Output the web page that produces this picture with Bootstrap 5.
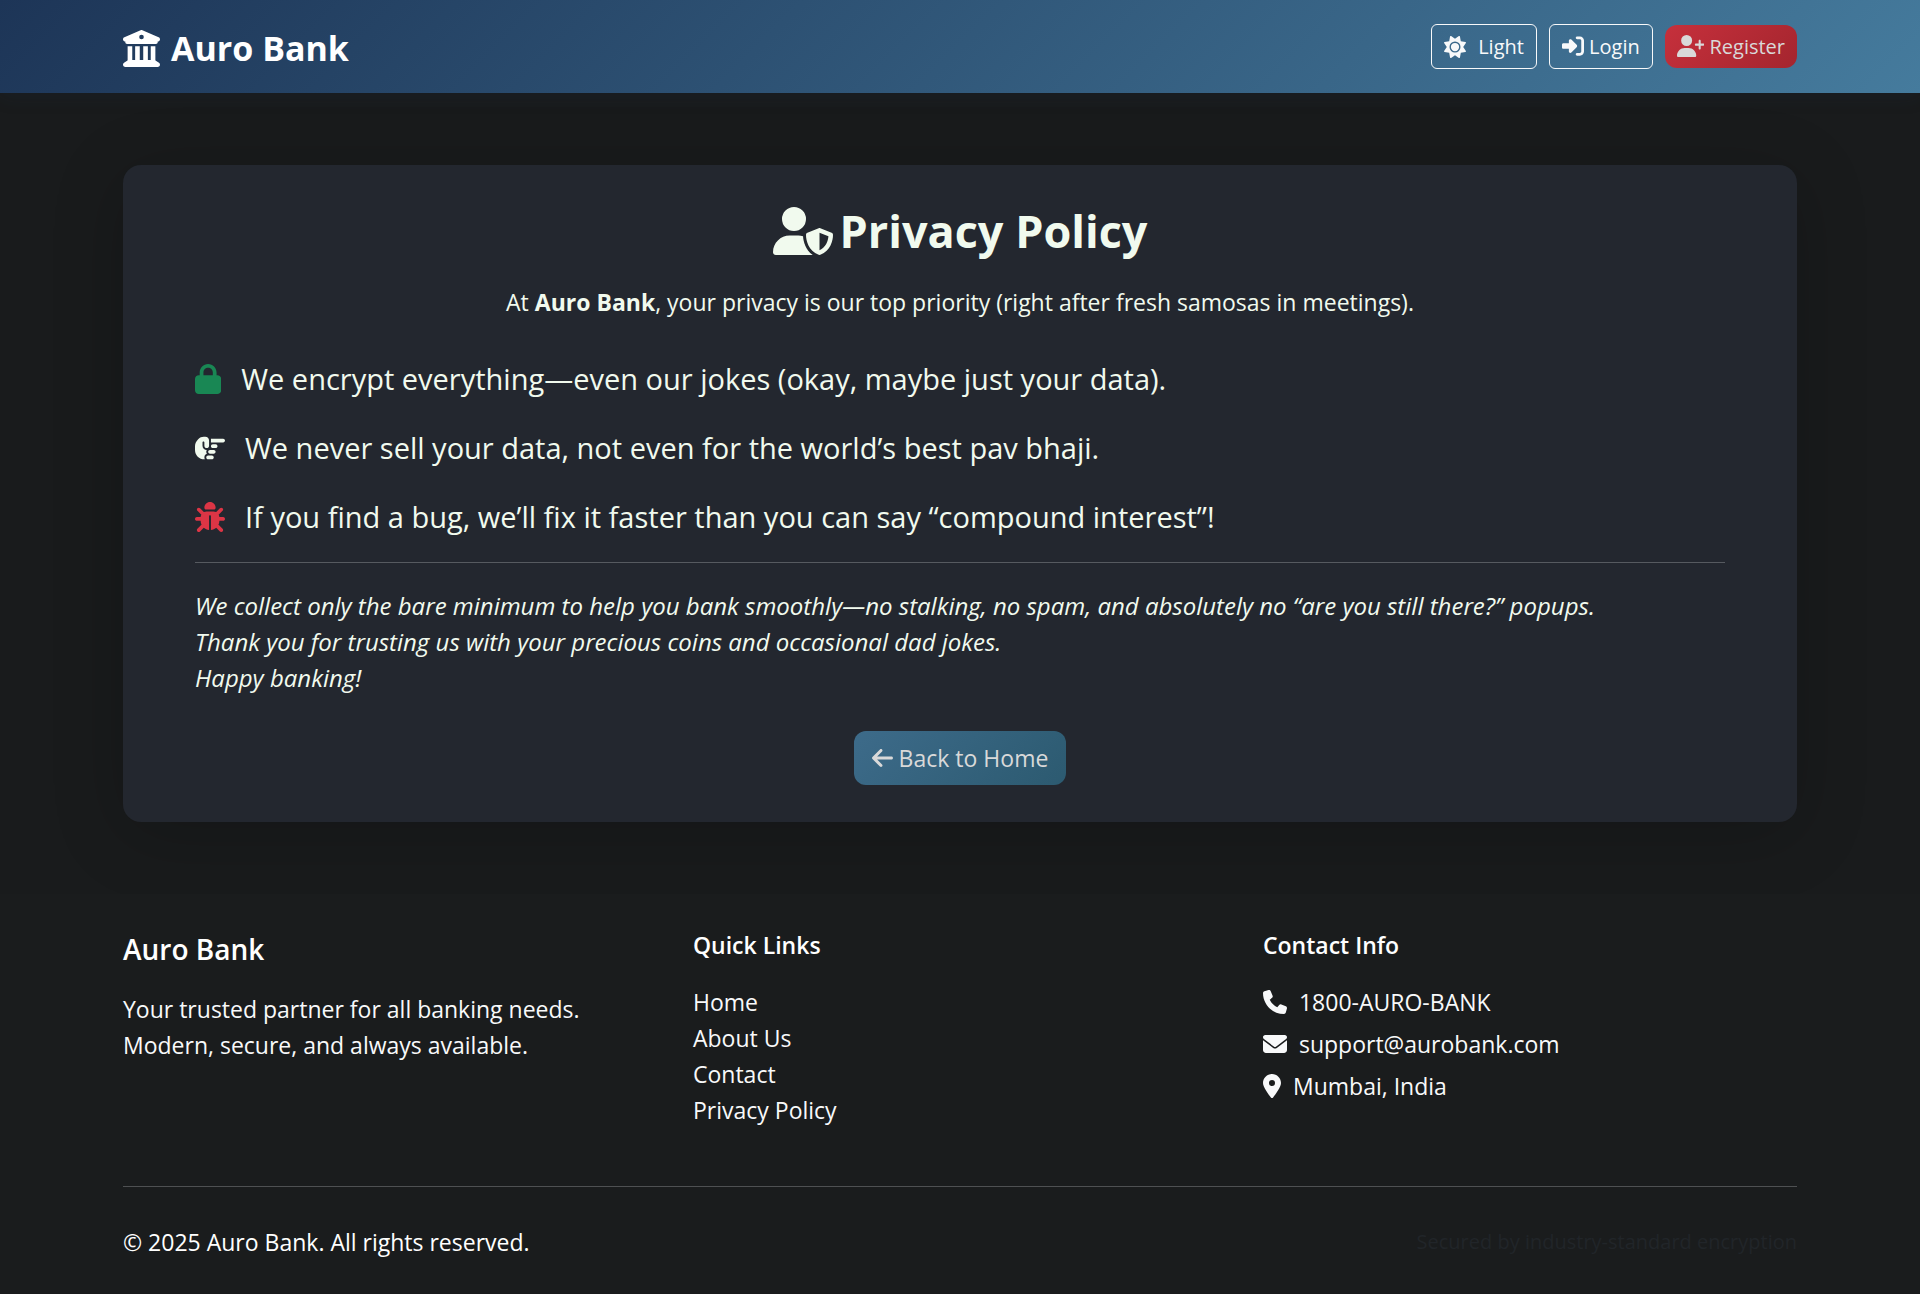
<!DOCTYPE html>
<html lang="en">
<head>
<meta charset="utf-8">
<meta name="viewport" content="width=device-width, initial-scale=1">
<title>Privacy Policy - Auro Bank</title>
<link href="https://cdn.jsdelivr.net/npm/bootstrap@5.3.0/dist/css/bootstrap.min.css" rel="stylesheet">
<style>
html { font-size: 24px; }
body { font-family: "Open Sans", "Noto Sans", sans-serif; font-size: 23px; line-height: 36px; background: #191b1c; color: #f1faee; }
.page-wrap { max-width: 1710px; padding-left: 18px; padding-right: 18px; }
.site-nav { background: linear-gradient(135deg, #1d3557 0%, #457b9d 100%); box-shadow: 0 3px 18px rgba(29,53,87,.15); padding: 18px 0; min-height: 93px; }
.ico { height: 1em; width: auto; fill: currentColor; vertical-align: -3px; flex: none; }
.brand { font-size: 34px; font-weight: 700; color: #fff; text-decoration: none; gap: 11px; line-height: 48px; padding-top: 3px; }
.brand .ico { height: 37px; }
.nav-btn { font-size: 20px; line-height: 31px; padding: 6px 12px; border-radius: 6px; color: #f8f9fa; border-color: #f8f9fa; white-space: nowrap; }
.nav-btn .ico { height: 22px; }
.btn-register { border: 0; border-radius: 12px; color: #d9d9d9; background: linear-gradient(135deg, #c6303c, #a4252e); }
.policy-card { background: #23272f; border-radius: 18px; padding: 37px 72px; margin-top: 72px; box-shadow: 0 12px 72px rgba(0,0,0,.2); }
.policy-title { font-size: 45px; line-height: 58px; font-weight: 700; margin-bottom: 24px; }
.policy-title .ico { height: 48px; margin-right: 7px; }
.intro { margin-bottom: 36px; }
.promises { margin-bottom: 23px; display: flex; flex-direction: column; gap: 24px; }
.promises li { font-size: 29px; line-height: 45px; display: flex; align-items: center; gap: 20px; }
.promises .ico { height: 30px; }
.rule { margin: 0; border-top: 1px solid #565a60; opacity: 1; }
.closing { font-size: 24px; font-style: italic; margin: 25px 0 35px; }
.btn-home { font-size: 23px; line-height: 36px; padding: 9px 18px; border: 0; border-radius: 12px; color: #d9d9d9; background: linear-gradient(135deg, #3d6b8a, #2c5a70); }
.btn-home .ico { height: 24px; }
.site-footer { background: #1a1c1d; color: #f8f9fa; margin-top: 72px; padding-top: 37px; }
.foot-row { --bs-gutter-x: 36px; }
.foot-name { font-size: 28px; line-height: 36px; font-weight: 600; color: #fff; margin-bottom: 24px; }
.foot-head { font-size: 23px; line-height: 29px; font-weight: 600; color: #fff; margin-bottom: 24px; }
.site-footer a { color: #f8f9fa; text-decoration: none; }
.contact-list li { margin-bottom: 6px; }
.contact-list .ico { height: 24px; margin-right: 12px; }
.foot-rule { border-top-color: #4e5052; margin-top: 58px; }
.legal { padding: 37px 0 33px; color: #fff; }
.secured { font-size: 20px; color: #212529; }
</style>
<script src="https://cdn.jsdelivr.net/npm/bootstrap@5.3.0/dist/js/bootstrap.bundle.min.js"></script>
</head>
<body>
<nav class="site-nav d-flex align-items-center">
  <div class="container-fluid page-wrap d-flex align-items-center justify-content-between">
    <a class="brand d-flex align-items-center" href="#">
      <svg class="ico" viewBox="0 0 512 512" aria-hidden="true"><path d="M243.4 2.6l-224 96c-14 6-21.8 21-18.7 35.8S16.8 160 32 160v8c0 13.3 10.7 24 24 24H456c13.3 0 24-10.7 24-24v-8c15.2 0 28.3-10.7 31.3-25.6s-4.8-29.9-18.7-35.8l-224-96c-8-3.4-17.2-3.4-25.2 0zM128 224H64V420.3c-.6 .3-1.2 .7-1.8 1.1l-48 32c-11.7 7.8-17 22.4-12.9 35.9S17.9 512 32 512H480c14.1 0 26.5-9.2 30.6-22.7s-1.1-28.1-12.9-35.9l-48-32c-.6-.4-1.2-.7-1.8-1.1V224H384V416H344V224H280V416H232V224H168V416H128V224zM256 64a32 32 0 1 1 0 64 32 32 0 1 1 0-64z"/></svg>
      <span>Auro Bank</span>
    </a>
    <div class="d-flex align-items-center gap-2">
      <button type="button" class="btn btn-outline-light nav-btn d-flex align-items-center gap-2"><svg class="ico" viewBox="0 0 512 512" aria-hidden="true"><path d="M361.5 1.2c5 2.1 8.6 6.6 9.6 11.9L391 121l107.9 19.8c5.3 1 9.8 4.6 11.9 9.6s1.5 10.7-1.6 15.2L446.9 256l62.3 90.3c3.1 4.5 3.7 10.2 1.6 15.2s-6.6 8.6-11.9 9.6L391 391 371.1 498.9c-1 5.3-4.6 9.8-9.6 11.9s-10.7 1.5-15.2-1.6L256 446.9l-90.3 62.3c-4.5 3.1-10.2 3.7-15.2 1.6s-8.6-6.6-9.6-11.9L121 391 13.1 371.1c-5.3-1-9.8-4.6-11.9-9.6s-1.5-10.7 1.6-15.2L65.1 256 2.8 165.7c-3.1-4.5-3.7-10.2-1.6-15.2s6.6-8.6 11.9-9.6L121 121 140.9 13.1c1-5.3 4.6-9.8 9.6-11.9s10.7-1.5 15.2 1.6L256 65.1 346.3 2.8c4.5-3.1 10.2-3.7 15.2-1.6zM160 256a96 96 0 1 1 192 0 96 96 0 1 1 -192 0zm224 0a128 128 0 1 0 -256 0 128 128 0 1 0 256 0z"/></svg><span>Light</span></button>
      <a href="#" class="btn btn-outline-light nav-btn"><svg class="ico" viewBox="0 0 512 512" aria-hidden="true"><path d="M217.9 105.9L340.7 228.7c7.2 7.2 11.3 17.1 11.3 27.3s-4.1 20.1-11.3 27.3L217.9 406.1c-6.4 6.4-15 9.9-24 9.9c-18.7 0-33.9-15.2-33.9-33.9l0-62.1L32 320c-17.7 0-32-14.3-32-32l0-64c0-17.7 14.3-32 32-32l128 0 0-62.1c0-18.7 15.2-33.9 33.9-33.9c9 0 17.6 3.6 24 9.9zM352 416l64 0c17.7 0 32-14.3 32-32l0-256c0-17.7-14.3-32-32-32l-64 0c-17.7 0-32-14.3-32-32s14.3-32 32-32l64 0c53 0 96 43 96 96l0 256c0 53-43 96-96 96l-64 0c-17.7 0-32-14.3-32-32s14.3-32 32-32z"/></svg> Login</a>
      <a href="#" class="btn nav-btn btn-register"><svg class="ico" viewBox="0 0 640 512" aria-hidden="true"><path d="M96 128a128 128 0 1 1 256 0A128 128 0 1 1 96 128zM0 482.3C0 383.8 79.8 304 178.3 304h91.4C368.2 304 448 383.8 448 482.3c0 16.4-13.3 29.7-29.7 29.7H29.7C13.3 512 0 498.7 0 482.3zM504 312V248H440c-13.3 0-24-10.7-24-24s10.7-24 24-24h64V136c0-13.3 10.7-24 24-24s24 10.7 24 24v64h64c13.3 0 24 10.7 24 24s-10.7 24-24 24H552v64c0 13.3-10.7 24-24 24s-24-10.7-24-24z"/></svg> Register</a>
    </div>
  </div>
</nav>

<main class="container-fluid page-wrap">
  <section class="policy-card">
    <h1 class="policy-title d-flex align-items-center justify-content-center"><svg class="ico" viewBox="0 0 640 512" aria-hidden="true"><path d="M224 256A128 128 0 1 0 224 0a128 128 0 1 0 0 256zm-45.7 48C79.8 304 0 383.8 0 482.3C0 498.7 13.3 512 29.7 512l388.6 0c1.8 0 3.5-.2 5.3-.5c-76.3-55.1-99.8-141-103.1-200.2c-16.1-4.8-33.1-7.3-50.7-7.3l-91.4 0zm308.8-78.3l-120 48C358 277.4 352 286.2 352 296c0 63.3 25.9 168.8 134.8 214.2c5.9 2.5 12.6 2.5 18.5 0C614.1 464.8 640 359.3 640 296c0-9.8-6-18.6-15.1-22.3l-120-48c-5.7-2.3-12.1-2.3-17.8 0zM591.4 312c-3.9 50.7-27.2 116.7-95.4 149.7V273.8L591.4 312z"/></svg><span>Privacy Policy</span></h1>
    <p class="intro text-center">At <strong>Auro Bank</strong>, your privacy is our top priority (right after fresh samosas in meetings).</p>
    <ul class="promises list-unstyled">
      <li><svg class="ico text-success" viewBox="0 0 448 512" aria-hidden="true"><path d="M144 144v48H304V144c0-44.2-35.8-80-80-80s-80 35.8-80 80zM80 192V144C80 64.5 144.5 0 224 0s144 64.5 144 144v48h16c35.3 0 64 28.7 64 64V448c0 35.3-28.7 64-64 64H64c-35.3 0-64-28.7-64-64V256c0-35.3 28.7-64 64-64H80z"/></svg><span>We encrypt everything—even our jokes (okay, maybe just your data).</span></li>
      <li><svg class="ico" viewBox="0 0 512 512" aria-hidden="true"><path d="M480 96c17.7 0 32 14.3 32 32s-14.3 32-32 32l-208 0 0-64 208 0zM320 288c17.7 0 32 14.3 32 32s-14.3 32-32 32l-64 0c-17.7 0-32-14.3-32-32s14.3-32 32-32l64 0zm64-64c0 17.7-14.3 32-32 32l-48 0c-17.7 0-32-14.3-32-32s14.3-32 32-32l48 0c17.7 0 32 14.3 32 32zM288 384c17.7 0 32 14.3 32 32s-14.3 32-32 32l-64 0c-17.7 0-32-14.3-32-32s14.3-32 32-32l64 0zm-88-96l.6 0c-5.4 9.4-8.6 20.3-8.6 32c0 13.2 4 25.4 10.8 35.6C177.9 364.3 160 388.1 160 416c0 11.7 3.1 22.6 8.6 32l-8.6 0C71.6 448 0 376.4 0 288l0-61.7c0-42.4 16.9-83.1 46.9-113.1l11.6-11.6C82.5 77.5 115.1 64 149 64l27 0c35.3 0 64 28.7 64 64l0 88c0 22.1-17.9 40-40 40s-40-17.9-40-40l0-56c0-8.8-7.2-16-16-16s-16 7.2-16 16l0 56c0 39.8 32.2 72 72 72z"/></svg><span>We never sell your data, not even for the world’s best pav bhaji.</span></li>
      <li><svg class="ico text-danger" viewBox="0 0 512 512" aria-hidden="true"><path d="M256 0c53 0 96 43 96 96v3.6c0 15.7-12.7 28.4-28.4 28.4H188.4c-15.7 0-28.4-12.7-28.4-28.4V96c0-53 43-96 96-96zM41.4 105.4c12.5-12.5 32.8-12.5 45.3 0l64 64c.7 .7 1.3 1.4 1.9 2.1c14.2-7.3 30.4-11.4 47.5-11.4H312c17.1 0 33.2 4.1 47.5 11.4c.6-.7 1.2-1.4 1.9-2.1l64-64c12.5-12.5 32.8-12.5 45.3 0s12.5 32.8 0 45.3l-64 64c-.7 .7-1.4 1.3-2.1 1.9c6.2 12 10.1 25.3 11.1 39.5H480c17.7 0 32 14.3 32 32s-14.3 32-32 32H416c0 24.6-5.5 47.8-15.4 68.6c2.2 1.3 4.2 2.9 6 4.8l64 64c12.5 12.5 12.5 32.8 0 45.3s-32.8 12.5-45.3 0l-63.1-63.1c-24.5 21.8-55.8 36.2-90.3 39.6V240c0-8.8-7.2-16-16-16s-16 7.2-16 16V479.2c-34.5-3.4-65.8-17.8-90.3-39.6L86.6 502.6c-12.5 12.5-32.8 12.5-45.3 0s-12.5-32.8 0-45.3l64-64c1.9-1.9 3.9-3.4 6-4.8C101.5 367.8 96 344.6 96 320H32c-17.7 0-32-14.3-32-32s14.3-32 32-32H96.3c1.1-14.1 5-27.5 11.1-39.5c-.7-.6-1.4-1.2-2.1-1.9l-64-64c-12.5-12.5-12.5-32.8 0-45.3z"/></svg><span>If you find a bug, we’ll fix it faster than you can say “compound interest”!</span></li>
    </ul>
    <hr class="rule">
    <p class="closing">We collect only the bare minimum to help you bank smoothly—no stalking, no spam, and absolutely no “are you still there?” popups.<br>Thank you for trusting us with your precious coins and occasional dad jokes.<br>Happy banking!</p>
    <div class="d-flex justify-content-center">
      <a href="#" class="btn btn-home"><svg class="ico" viewBox="0 0 448 512" aria-hidden="true"><path d="M9.4 233.4c-12.5 12.5-12.5 32.8 0 45.3l160 160c12.5 12.5 32.8 12.5 45.3 0s12.5-32.8 0-45.3L109.2 288 416 288c17.7 0 32-14.3 32-32s-14.3-32-32-32l-306.7 0L214.6 118.6c12.5-12.5 12.5-32.8 0-45.3s-32.8-12.5-45.3 0l-160 160z"/></svg> Back to Home</a>
    </div>
  </section>
</main>

<footer class="site-footer">
  <div class="container-fluid page-wrap">
    <div class="row foot-row">
      <div class="col-md-4">
        <h5 class="foot-name">Auro Bank</h5>
        <p class="mb-0">Your trusted partner for all banking needs.<br>Modern, secure, and always available.</p>
      </div>
      <div class="col-md-4">
        <h6 class="foot-head">Quick Links</h6>
        <ul class="list-unstyled mb-0">
          <li><a href="#">Home</a></li>
          <li><a href="#">About Us</a></li>
          <li><a href="#">Contact</a></li>
          <li><a href="#">Privacy Policy</a></li>
        </ul>
      </div>
      <div class="col-md-4">
        <h6 class="foot-head">Contact Info</h6>
        <ul class="list-unstyled contact-list mb-0">
          <li><svg class="ico" viewBox="0 0 512 512" aria-hidden="true"><path d="M164.9 24.6c-7.7-18.6-28-28.5-47.4-23.2l-88 24C12.1 30.2 0 46 0 64C0 311.4 200.6 512 448 512c18 0 33.8-12.1 38.6-29.5l24-88c5.3-19.4-4.6-39.7-23.2-47.4l-96-40c-16.3-6.8-35.2-2.1-46.3 11.6L304.7 368C234.3 334.7 177.3 277.7 144 207.3L193.3 167c13.7-11.2 18.4-30 11.6-46.3l-40-96z"/></svg>1800-AURO-BANK</li>
          <li><svg class="ico" viewBox="0 0 512 512" aria-hidden="true"><path d="M48 64C21.5 64 0 85.5 0 112c0 15.1 7.1 29.3 19.2 38.4L236.8 313.6c11.4 8.5 27 8.5 38.4 0L492.8 150.4c12.1-9.1 19.2-23.3 19.2-38.4c0-26.5-21.5-48-48-48H48zM0 176V384c0 35.3 28.7 64 64 64H448c35.3 0 64-28.7 64-64V176L294.4 339.2c-22.8 17.1-54 17.1-76.8 0L0 176z"/></svg>support@aurobank.com</li>
          <li><svg class="ico" viewBox="0 0 384 512" aria-hidden="true"><path d="M215.7 499.2C267 435 384 279.4 384 192C384 86 298 0 192 0S0 86 0 192c0 87.4 117 243 168.3 307.2c12.3 15.3 35.1 15.3 47.4 0zM192 128a64 64 0 1 1 0 128 64 64 0 1 1 0-128z"/></svg>Mumbai, India</li>
        </ul>
      </div>
    </div>
    <hr class="rule foot-rule">
    <div class="legal d-flex justify-content-between align-items-center">
      <span>© 2025 Auro Bank. All rights reserved.</span>
      <span class="secured">Secured by industry-standard encryption</span>
    </div>
  </div>
</footer>
</body>
</html>
